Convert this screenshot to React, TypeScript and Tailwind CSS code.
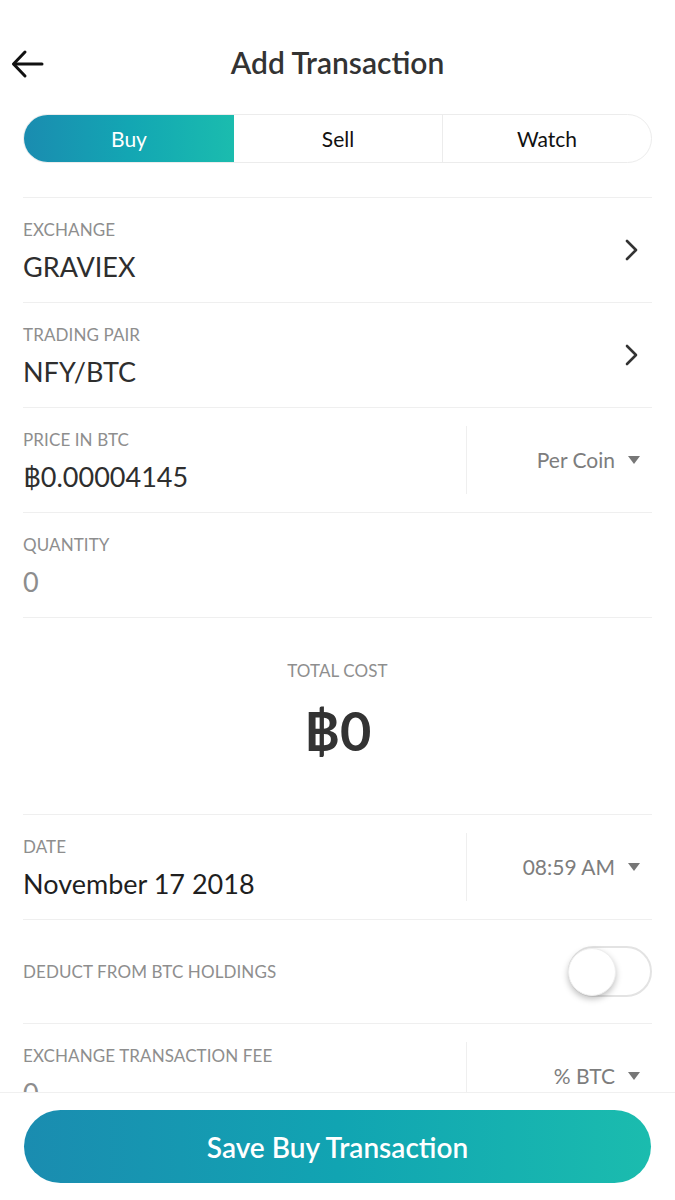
import React from "react";

const font = { fontFamily: "Lato, 'Noto Sans', 'DejaVu Sans', sans-serif" };

function Chevron() {
  return (
    <svg width="16" height="24" viewBox="0 0 16 24" className="mr-[12px]">
      <polyline points="3,3 12,12 3,21" fill="none" stroke="#333" strokeWidth="2.6" strokeLinecap="round" strokeLinejoin="round" />
    </svg>
  );
}

function Caret() {
  return (
    <svg width="14" height="10" viewBox="0 0 14 10" className="ml-[12px]">
      <polygon points="1,1 13,1 7,9" fill="#777" />
    </svg>
  );
}

function Label({ children }: { children: React.ReactNode }) {
  return <div className="text-[17px] leading-[20px] text-[#8e8e8e] tracking-[0.1px]">{children}</div>;
}

function NavRow({ label, value }: { label: string; value: string }) {
  return (
    <div className="h-[105px] border-b border-[#efefef] flex items-center justify-between">
      <div className="pt-[3px]">
        <Label>{label}</Label>
        <div className="mt-[10px] text-[27px] leading-[34px] text-[#2e2e2e]">{value}</div>
      </div>
      <Chevron />
    </div>
  );
}

function SplitRow({ label, value, right, valueClass }: { label: string; value: string; right: string; valueClass: string }) {
  return (
    <div className="h-[105px] border-b border-[#efefef] flex items-center">
      <div className="flex-1 pt-[3px]">
        <Label>{label}</Label>
        <div className={"mt-[10px] text-[27px] leading-[34px] " + valueClass}>{value}</div>
      </div>
      <div className="w-[186px] h-[68px] border-l border-[#efefef] flex items-center justify-end pr-[11px]">
        <span className="text-[21px] text-[#7d7d7d]">{right}</span>
        <Caret />
      </div>
    </div>
  );
}

export default function App() {
  return (
    <div style={font} className="w-[675px] h-[1200px] bg-white flex flex-col overflow-hidden">
      <div className="flex-1 overflow-hidden">
        <div className="relative h-[80px] pt-[44px]">
          <svg width="34" height="30" viewBox="0 0 34 30" className="absolute left-[10px] top-[49px]">
            <line x1="4" y1="15" x2="32" y2="15" stroke="#111" strokeWidth="3" strokeLinecap="round" />
            <polyline points="15,3 3.5,15 15,27" fill="none" stroke="#111" strokeWidth="3" strokeLinecap="round" strokeLinejoin="round" />
          </svg>
          <div className="text-center text-[30px] leading-[36px] font-semibold text-[#333]">Add Transaction</div>
        </div>
        <div className="mx-[23px] mt-[34px] h-[49px] flex rounded-full border border-[#ececec] overflow-hidden text-[21px]">
          <div className="w-[210px] flex items-center justify-center text-white bg-gradient-to-r from-[#1a8cb0] via-[#13a6b3] to-[#1bbcae]">Buy</div>
          <div className="flex-1 flex items-center justify-center text-[#111] border-r border-[#ececec]">Sell</div>
          <div className="flex-1 flex items-center justify-center text-[#111]">Watch</div>
        </div>
        <div className="mx-[23px] mt-[34px] border-t border-[#efefef]">
          <NavRow label="EXCHANGE" value="GRAVIEX" />
          <NavRow label="TRADING PAIR" value="NFY/BTC" />
          <SplitRow label="PRICE IN BTC" value="฿0.00004145" right="Per Coin" valueClass="text-[#2e2e2e]" />
          <div className="h-[105px] border-b border-[#efefef] flex items-center">
            <div className="pt-[3px]">
              <Label>QUANTITY</Label>
              <div className="mt-[10px] text-[27px] leading-[34px] text-[#8d8d8d]">0</div>
            </div>
          </div>
          <div className="h-[197px] border-b border-[#efefef] flex flex-col items-center pt-[43px]">
            <Label>TOTAL COST</Label>
            <div className="mt-[20px] text-[54px] leading-[60px] font-bold text-[#333]">฿0</div>
          </div>
          <SplitRow label="DATE" value="November 17 2018" right="08:59 AM" valueClass="text-[#1f1f1f]" />
          <div className="h-[104px] border-b border-[#efefef] flex items-center justify-between">
            <Label>DEDUCT FROM BTC HOLDINGS</Label>
            <div className="relative w-[84px] h-[51px] rounded-full border-2 border-[#e3e3e3] bg-white">
              <div className="absolute left-[-2px] top-[0px] w-[48px] h-[48px] rounded-full bg-white shadow-[0_3px_6px_rgba(0,0,0,0.25)] border border-[#eee]" />
            </div>
          </div>
          <SplitRow label="EXCHANGE TRANSACTION FEE" value="0" right="% BTC" valueClass="text-[#8d8d8d]" />
        </div>
      </div>
      <div className="h-[108px] shrink-0 border-t border-[#f0f0f0] bg-white px-[24px] pt-[17px]">
        <div className="h-[73px] rounded-full bg-gradient-to-r from-[#1a8cb0] via-[#11a4b2] to-[#1bbcae] flex items-center justify-center text-white text-[28px] font-semibold">
          Save Buy Transaction
        </div>
      </div>
    </div>
  );
}
